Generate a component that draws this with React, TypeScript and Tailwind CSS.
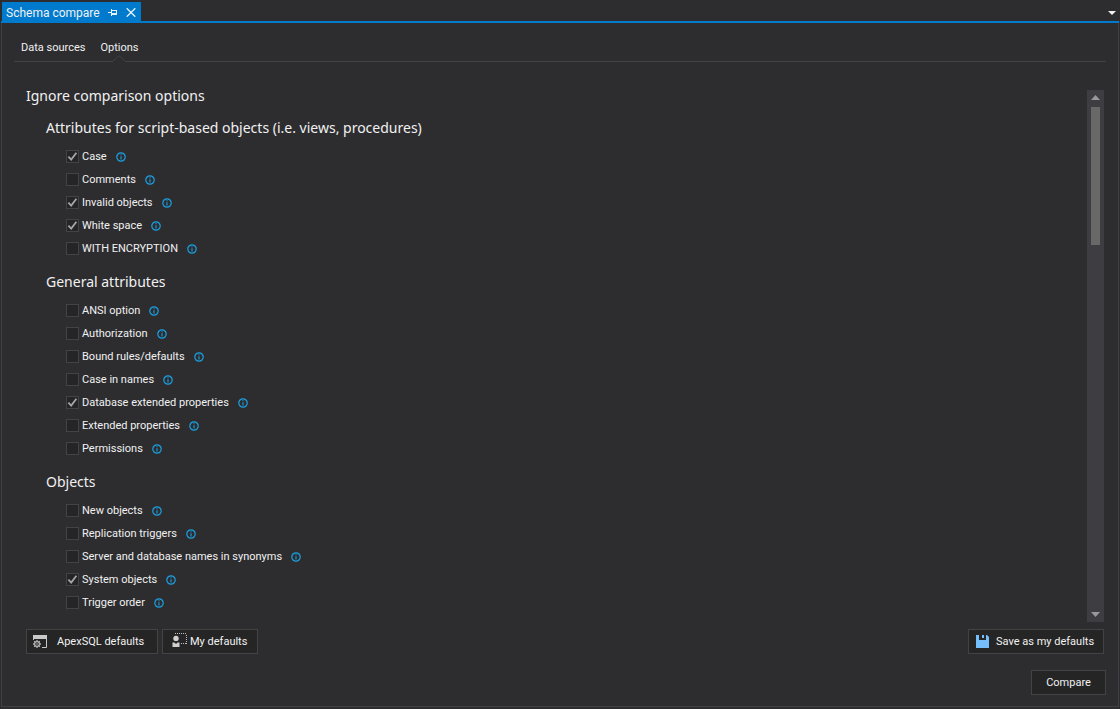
import React from "react";

type Option = { label: string; checked?: boolean };
type Group = { title: string; options: Option[] };

const groups: Group[] = [
  {
    title: "Attributes for script-based objects (i.e. views, procedures)",
    options: [
      { label: "Case", checked: true },
      { label: "Comments" },
      { label: "Invalid objects", checked: true },
      { label: "White space", checked: true },
      { label: "WITH ENCRYPTION" },
    ],
  },
  {
    title: "General attributes",
    options: [
      { label: "ANSI option" },
      { label: "Authorization" },
      { label: "Bound rules/defaults" },
      { label: "Case in names" },
      { label: "Database extended properties", checked: true },
      { label: "Extended properties" },
      { label: "Permissions" },
    ],
  },
  {
    title: "Objects",
    options: [
      { label: "New objects" },
      { label: "Replication triggers" },
      { label: "Server and database names in synonyms" },
      { label: "System objects", checked: true },
      { label: "Trigger order" },
    ],
  },
];

function PinIcon() {
  return (
    <svg width="9" height="7" viewBox="0 0 9 7" fill="none" stroke="#e6f2fb" shapeRendering="crispEdges">
      <path d="M0 3.5H3M3.5 0V7M4 1.5H8.5V5.5" />
      <path d="M4 5H8.5" strokeWidth="2" />
    </svg>
  );
}

function CloseIcon() {
  return (
    <svg width="10" height="9" viewBox="0 0 10 9" fill="none" stroke="#e6f2fb" strokeWidth="1.4">
      <path d="M0.7 0.3L9.3 8.7M9.3 0.3L0.7 8.7" />
    </svg>
  );
}

function InfoIcon() {
  return (
    <svg width="10" height="10" viewBox="0 0 10 10" fill="none" stroke="#1ba1e2">
      <circle cx="5" cy="5" r="4.2" strokeWidth="1.2" />
      <path d="M5 2.2V3.3M5 4.2V7.6" strokeWidth="1.1" />
    </svg>
  );
}

function DefaultsIcon() {
  return (
    <svg width="15" height="14" viewBox="0 0 15 14" fill="none">
      <path d="M0 0H14V4H0Z" fill="#c8c8c8" />
      <path d="M0.5 4V5M13.5 4V12.5H9" stroke="#c8c8c8" />
      <circle cx="4" cy="9" r="2.4" stroke="#b4b4b4" strokeWidth="1.2" />
      <circle cx="4" cy="9" r="0.8" fill="#b4b4b4" />
      <path
        d="M4 5V6.5M4 11.5V13M0 9H1.5M6.5 9H8M1.2 6.2L2.3 7.3M5.7 10.7L6.8 11.8M6.8 6.2L5.7 7.3M2.3 10.7L1.2 11.8"
        stroke="#b4b4b4"
        strokeWidth="1.3"
      />
    </svg>
  );
}

function UserIcon() {
  return (
    <svg className="mb-1" width="15" height="14" viewBox="0 0 15 14" fill="none">
      <circle cx="4" cy="5.4" r="2.7" fill="#d0d0d0" />
      <path d="M0.5 14V9.4H2.4L4 11L5.6 9.4H7.5V14Z" fill="#d0d0d0" />
      <path d="M3 0.5H15M14.5 2V11M9 10.5H14" stroke="#c0c0c0" strokeDasharray="1 1" />
    </svg>
  );
}

function SaveIcon() {
  return (
    <svg width="13" height="13" viewBox="0 0 13 13">
      <path d="M0 0H3V5H10V0H11L13 2V13H0Z" fill="#75bfff" />
      <path d="M6 0H8V3H6Z" fill="#75bfff" />
    </svg>
  );
}

function OptionRow({ label, checked }: Option) {
  return (
    <li className="flex h-[23px] items-center gap-[9px]">
      <label className="flex items-center gap-[3px]">
        <span className="grid">
          <input
            type="checkbox"
            defaultChecked={checked}
            className="peer col-start-1 row-start-1 size-[13px] appearance-none border border-[#434346] bg-[#252526]"
          />
          <svg
            className="pointer-events-none invisible col-start-1 row-start-1 size-[13px] peer-checked:visible"
            viewBox="0 0 13 13"
            fill="none"
            stroke="#a6a6a6"
            strokeWidth="1.8"
          >
            <path d="M2.4 6.6L5.2 9.6L10.4 2.8" />
          </svg>
        </span>
        <span className="pt-0.5">{label}</span>
      </label>
      <button type="button" aria-label={`About ${label}`}>
        <InfoIcon />
      </button>
    </li>
  );
}

const buttonClass = "flex h-[25px] items-center whitespace-nowrap border border-[#434346] bg-[#252526]";

export default function App() {
  return (
    <div className="flex h-screen flex-col bg-[#2d2d30] px-px pt-0.5 pb-0.5 font-[Tahoma,Roboto,sans-serif] text-[11px] text-[#f1f1f1]">
      <header className="flex h-[21px] shrink-0 items-stretch justify-between border-b-2 border-[#007acc] pl-px">
        <div className="flex items-center bg-[#007acc] px-1 pt-px text-[12px]">
          <span className="pt-px">Schema compare</span>
          <button type="button" aria-label="Pin" className="ml-2">
            <PinIcon />
          </button>
          <button type="button" aria-label="Close" className="mr-px ml-[9px]">
            <CloseIcon />
          </button>
        </div>
        <button type="button" aria-label="Open documents" className="px-[3px] pt-0.5">
          <svg width="8" height="4" viewBox="0 0 8 4" fill="#f1f1f1">
            <path d="M0 0H8L4 4Z" />
          </svg>
        </button>
      </header>

      <main className="flex min-h-0 flex-1 flex-col border border-t-0 border-[#3f3f46] px-3 pb-[11px]">
        <nav className="flex h-[39px] shrink-0 items-center gap-[15px] border-b border-[#434346] px-[7px] pt-[11px]">
          <a href="#data-sources" className="h-full leading-7">
            Data sources
          </a>
          <a href="#options" aria-current="page" className="relative h-full leading-7">
            Options
            <svg
              className="absolute -bottom-px left-1/2 -translate-x-1/2"
              width="14"
              height="7"
              viewBox="0 0 14 7"
              fill="#2d2d30"
              stroke="#434346"
            >
              <path d="M1 7H13" stroke="#2d2d30" strokeWidth="2" />
              <path d="M0.5 6.5L7 0.7L13.5 6.5" />
            </svg>
          </a>
        </nav>

        <div className="mt-7 flex min-h-0 flex-1 justify-between pr-0.5 pl-3">
          <section className="flex min-h-0 flex-1 flex-col gap-2 font-[Tahoma,'Noto_Sans',sans-serif]">
            <h1 className="-mt-1.5 text-[14px] leading-6">Ignore comparison options</h1>
            <div className="flex flex-col gap-2.5 pl-5">
              {groups.map((group) => (
                <section key={group.title}>
                  <h2 className="text-[14px] leading-6">{group.title}</h2>
                  <ul className="mt-[5px] pl-5 font-[Tahoma,Roboto,sans-serif]">
                    {group.options.map((option) => (
                      <OptionRow key={option.label} {...option} />
                    ))}
                  </ul>
                </section>
              ))}
            </div>
          </section>
          <div className="flex w-[17px] flex-col items-center justify-between bg-[#3e3e42] py-[5px]" aria-hidden="true">
            <svg width="9" height="5" viewBox="0 0 9 5" fill="#999999">
              <path d="M0 5L4.5 0L9 5Z" />
            </svg>
            <div className="mt-[7px] flex w-[9px] flex-1 flex-col">
              <div className="h-[138px] bg-[#686868]" />
            </div>
            <svg width="9" height="5" viewBox="0 0 9 5" fill="#999999">
              <path d="M0 0L4.5 5L9 0Z" />
            </svg>
          </div>
        </div>

        <div className="mt-[7px] flex shrink-0 items-center justify-between pr-0.5 pl-3">
          <div className="flex gap-1">
            <button type="button" className={`${buttonClass} w-[132px] gap-[9px] pl-1.5`}>
              <DefaultsIcon />
              <span className="pt-0.5">ApexSQL defaults</span>
            </button>
            <button type="button" className={`${buttonClass} w-24 gap-[3px] pl-[9px]`}>
              <UserIcon />
              <span className="pt-0.5">My defaults</span>
            </button>
          </div>
          <button type="button" className={`${buttonClass} w-[136px] gap-[7px] pl-[7px]`}>
            <SaveIcon />
            <span className="pt-0.5">Save as my defaults</span>
          </button>
        </div>
        <div className="mt-4 flex shrink-0 justify-end">
          <button type="button" className={`${buttonClass} w-[75px] justify-center`}>
            <span className="pt-0.5">Compare</span>
          </button>
        </div>
      </main>
    </div>
  );
}
